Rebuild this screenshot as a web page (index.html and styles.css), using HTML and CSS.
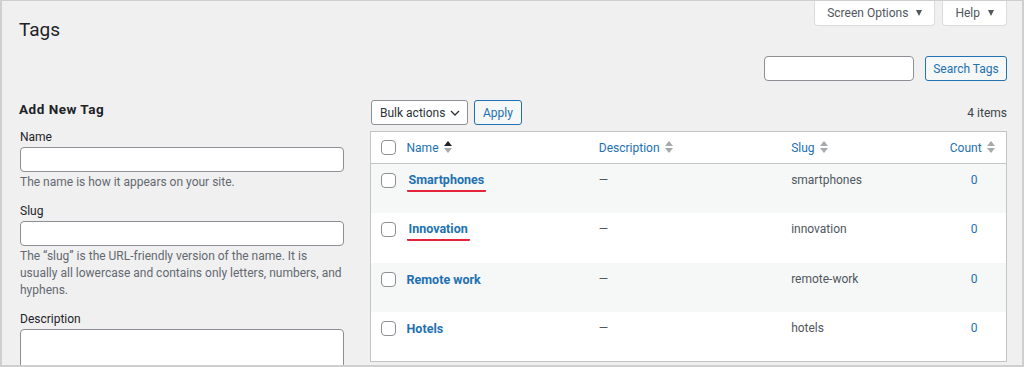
FILE: index.html
```html
<!DOCTYPE html>
<html>
  <head>
  <link rel="stylesheet" href="styles.css">
  </head>
  <body>
    <div class="frame">
      <div class="topbar">
        <h1 class="pageTitle">Tags</h1>
        <div class="screenMeta">
          <button class="metaButton">Screen Options<span class="caret"></span></button>
          <button class="metaButton">Help<span class="caret"></span></button>
        </div>
      </div>

      <div class="searchBox">
        <input type="text" class="searchInput">
        <button class="outlineButton">Search Tags</button>
      </div>

      <div class="columns">
        <div class="leftColumn">
          <h2 class="formTitle">Add New Tag</h2>
          <div class="formField">
            <label class="fieldLabel">Name</label>
            <input type="text" class="fieldInput">
            <p class="hint">The name is how it appears on your site.</p>
          </div>
          <div class="formField">
            <label class="fieldLabel">Slug</label>
            <input type="text" class="fieldInput">
            <p class="hint">The &ldquo;slug&rdquo; is the URL-friendly version of the name. It is usually all lowercase and contains only letters, numbers, and hyphens.</p>
          </div>
          <div class="formField">
            <label class="fieldLabel">Description</label>
            <textarea class="fieldArea"></textarea>
          </div>
        </div>

        <div class="rightColumn">
          <div class="tablenav">
            <div class="bulk">
              <div class="selectBox">Bulk actions
                <svg width="10" height="6" viewBox="0 0 10 6"><path d="M1 1l4 4 4-4" fill="none" stroke="#2c3338" stroke-width="1.3"/></svg>
              </div>
              <button class="outlineButton">Apply</button>
            </div>
            <span class="itemCount">4 items</span>
          </div>

          <table class="tagTable">
            <colgroup>
              <col class="colCheck">
              <col class="colName">
              <col class="colDesc">
              <col class="colSlug">
              <col class="colCount">
            </colgroup>
            <thead>
              <tr>
                <th class="checkCell"><span class="checkbox"></span></th>
                <th><span class="sortLink">Name</span><span class="sorter"><i class="up dark"></i><i class="down"></i></span></th>
                <th><span class="sortLink">Description</span><span class="sorter"><i class="up"></i><i class="down"></i></span></th>
                <th><span class="sortLink">Slug</span><span class="sorter"><i class="up"></i><i class="down"></i></span></th>
                <th class="num"><span class="sortLink">Count</span><span class="sorter"><i class="up"></i><i class="down"></i></span></th>
              </tr>
            </thead>
            <tbody>
              <tr class="alt">
                <td class="checkCell"><span class="checkbox"></span></td>
                <td><a class="rowTitle marked">Smartphones</a></td>
                <td class="muted">&mdash;</td>
                <td class="muted">smartphones</td>
                <td class="num"><a class="countLink">0</a></td>
              </tr>
              <tr>
                <td class="checkCell"><span class="checkbox"></span></td>
                <td><a class="rowTitle marked">Innovation</a></td>
                <td class="muted">&mdash;</td>
                <td class="muted">innovation</td>
                <td class="num"><a class="countLink">0</a></td>
              </tr>
              <tr class="alt">
                <td class="checkCell"><span class="checkbox"></span></td>
                <td><a class="rowTitle">Remote work</a></td>
                <td class="muted">&mdash;</td>
                <td class="muted">remote-work</td>
                <td class="num"><a class="countLink">0</a></td>
              </tr>
              <tr>
                <td class="checkCell"><span class="checkbox"></span></td>
                <td><a class="rowTitle">Hotels</a></td>
                <td class="muted">&mdash;</td>
                <td class="muted">hotels</td>
                <td class="num"><a class="countLink">0</a></td>
              </tr>
            </tbody>
          </table>
        </div>
      </div>
    </div>
  </body>
</html>
```

FILE: styles.css
```css
body {
  margin: 0;
  background: #ffffff;
  font-family: Roboto, "Open Sans", sans-serif;
  font-size: 12px;
  color: #1d2327;
}

.frame {
  box-sizing: border-box;
  width: 1024px;
  height: 367px;
  overflow: hidden;
  background: #f0f0f1;
  border: 1px solid #cfcfcf;
  border-left-width: 2px;
  border-right-width: 2px;
  border-bottom-width: 2px;
  padding: 0 15px 0 17px;
}

/* top row: title + screen meta buttons */
.topbar {
  display: flex;
  justify-content: space-between;
  align-items: flex-start;
}

.pageTitle {
  margin: 0;
  padding-top: 17px;
  font-size: 19px;
  font-weight: 400;
  line-height: 24px;
  color: #1d2327;
}

.screenMeta {
  display: flex;
  gap: 7px;
}

.metaButton {
  display: flex;
  align-items: center;
  height: 26px;
  margin-top: -1px;
  padding: 1px 12px 0 12px;
  background: #ffffff;
  border: 1px solid #dcdcde;
  border-top: none;
  border-radius: 0 0 4px 4px;
  font-family: inherit;
  font-size: 12px;
  color: #50575e;
}

.caret {
  width: 0;
  height: 0;
  margin-left: 8px;
  border-left: 3.5px solid transparent;
  border-right: 3.5px solid transparent;
  border-top: 6px solid #50575e;
}

.searchBox {
  display: flex;
  justify-content: flex-end;
  gap: 11px;
  margin-top: 14px;
}

.searchInput {
  box-sizing: border-box;
  width: 150px;
  height: 25px;
  border: 1px solid #8c8f94;
  border-radius: 4px;
  background: #ffffff;
}

.outlineButton {
  box-sizing: border-box;
  height: 25px;
  padding: 0 8px;
  background: #f6f7f7;
  border: 1px solid #2271b1;
  border-radius: 3px;
  color: #2271b1;
  font-family: inherit;
  font-size: 12px;
}

.searchBox .outlineButton {
  width: 82px;
  padding: 0;
}

.columns {
  display: flex;
  gap: 26px;
  margin-top: 19px;
}

.leftColumn {
  width: 325px;
  flex-shrink: 0;
}

.formTitle {
  margin: 0;
  font-size: 13.5px;
  font-weight: 700;
  letter-spacing: 0.5px;
  line-height: 18px;
}

.formField {
  margin-top: 11px;
}

.formField + .formField {
  margin-top: 12px;
}

.fieldLabel {
  display: block;
  line-height: 16px;
  margin-bottom: 2px;
  padding-left: 1px;
}

.fieldInput, .fieldArea {
  display: block;
  box-sizing: border-box;
  width: 324px;
  height: 25px;
  margin-left: 1px;
  border: 1px solid #8c8f94;
  border-radius: 4px;
  background: #ffffff;
}

.fieldArea {
  height: 60px;
  resize: none;
}

.hint {
  margin: 2px 0 0 0;
  line-height: 17px;
  color: #646970;
  padding-left: 1px;
}

.rightColumn {
  flex: 1;
}

.tablenav {
  display: flex;
  justify-content: space-between;
  align-items: center;
  height: 25px;
  padding-left: 1px;
}

.bulk {
  display: flex;
  gap: 6px;
}

.selectBox {
  box-sizing: border-box;
  height: 25px;
  width: 97px;
  display: flex;
  align-items: center;
  justify-content: space-between;
  padding: 0 7px 0 8px;
  background: #ffffff;
  border: 1px solid #8c8f94;
  border-radius: 3px;
  color: #2c3338;
}

.itemCount {
  color: #3c434a;
}

.tagTable {
  box-sizing: border-box;
  width: 637px;
  margin-top: 6px;
  border: 1px solid #c3c4c7;
  border-collapse: collapse;
  table-layout: fixed;
  background: #ffffff;
}

.colCheck { width: 26px; }
.colName { width: 192px; }
.colDesc { width: 192px; }
.colSlug { width: 161px; }
.colCount { width: 64px; }

.tagTable th {
  height: 31px;
  padding: 0 10px;
  text-align: left;
  font-weight: 400;
  border-bottom: 1px solid #c3c4c7;
  color: #2271b1;
}

.tagTable td {
  padding: 8px 10px 0 10px;
  height: 41.5px;
  box-sizing: border-box;
  vertical-align: top;
  line-height: 17px;
}

.tagTable tbody tr {
  height: 49.5px;
}

.tagTable .checkCell {
  padding: 0 0 0 10px;
}

.tagTable td.checkCell {
  padding-top: 9px;
}

.tagTable tr.alt td {
  background: #f6f7f7;
}

.checkbox {
  display: block;
  box-sizing: border-box;
  width: 15px;
  height: 15px;
  border: 1px solid #8c8f94;
  border-radius: 4px;
  background: #ffffff;
}

.sorter {
  display: inline-flex;
  flex-direction: column;
  gap: 2px;
  margin-left: 5px;
  vertical-align: middle;
  position: relative;
  top: -1px;
}

.sorter i {
  width: 0;
  height: 0;
  border-left: 4px solid transparent;
  border-right: 4px solid transparent;
}

.sorter .up {
  border-bottom: 5px solid #a7aaad;
}

.sorter .up.dark {
  border-bottom-color: #1d2327;
}

.sorter .down {
  border-top: 5px solid #a7aaad;
}

.num {
  text-align: center;
}

.tagTable th.num {
  text-align: center;
  padding: 0 4px 0 0;
}

.rowTitle {
  font-weight: 700;
  font-size: 12.5px;
  color: #2271b1;
}

.marked {
  display: inline-block;
  line-height: 15px;
  padding: 0 2px 3px 2px;
  border-bottom: 2px solid #e3243b;
  border-radius: 1px;
}

.muted {
  color: #50575e;
}

.countLink {
  color: #2271b1;
}
```
